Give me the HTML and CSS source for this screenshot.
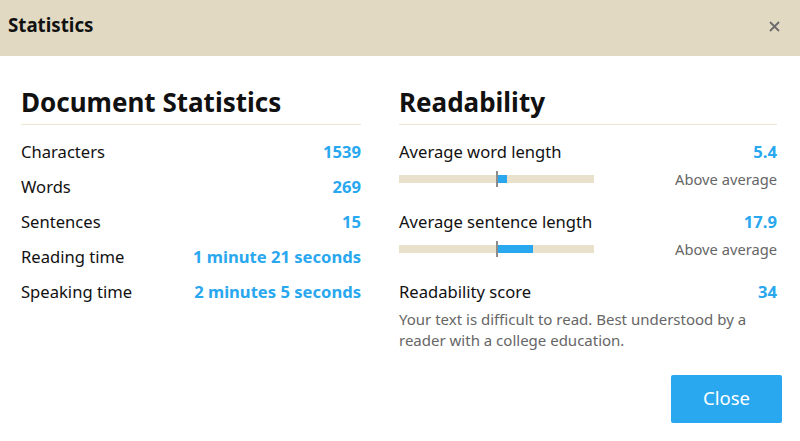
FILE: index.html
```html
<!DOCTYPE html>
<html>
<head>
<meta charset="utf-8">
<link rel="stylesheet" href="styles.css">
</head>
<body>
<div class="dialog">
  <header class="dialog-header">
    <h1 class="dialog-title">Statistics</h1>
    <button class="dialog-x" aria-label="Close">
      <svg width="11" height="11" viewBox="0 0 11 11"><path d="M1 1L10 10M10 1L1 10" stroke="#6b6b6b" stroke-width="1.8" fill="none"/></svg>
    </button>
  </header>
  <main class="dialog-body">
    <section class="col">
      <h2 class="col-title">Document Statistics</h2>
      <div class="row"><span>Characters</span><span class="val">1539</span></div>
      <div class="row"><span>Words</span><span class="val">269</span></div>
      <div class="row"><span>Sentences</span><span class="val">15</span></div>
      <div class="row"><span>Reading time</span><span class="val">1 minute 21 seconds</span></div>
      <div class="row"><span>Speaking time</span><span class="val">2 minutes 5 seconds</span></div>
    </section>
    <section class="col">
      <h2 class="col-title">Readability</h2>
      <div class="metric">
        <div class="row"><span>Average word length</span><span class="val">5.4</span></div>
        <div class="bar-row">
          <div class="bar"><div class="bar-fill" style="width:9px"></div><div class="bar-mark"></div></div>
          <span class="note">Above average</span>
        </div>
      </div>
      <div class="metric">
        <div class="row"><span>Average sentence length</span><span class="val">17.9</span></div>
        <div class="bar-row">
          <div class="bar"><div class="bar-fill" style="width:35px"></div><div class="bar-mark"></div></div>
          <span class="note">Above average</span>
        </div>
      </div>
      <div class="row"><span>Readability score</span><span class="val">34</span></div>
      <p class="desc">Your text is difficult to read. Best understood by a reader with a college education.</p>
    </section>
  </main>
  <footer class="dialog-footer">
    <button class="btn-close">Close</button>
  </footer>
</div>
</body>
</html>
```
FILE: styles.css
```css
* { box-sizing: border-box; }
html, body { margin: 0; padding: 0; background: #fff; }
body { font-family: "Noto Sans", "Open Sans", sans-serif; color: #111; }
.dialog { width: 800px; height: 441px; background: #fff; }
.dialog-header {
  height: 56px;
  background: #e2d9c2;
  display: flex;
  align-items: center;
  justify-content: space-between;
  padding: 0 20px 0 8px;
}
.dialog-title { margin: 0; font-size: 18.7px; font-weight: 700; color: #111; line-height: 24px; padding-bottom: 6px; }
.dialog-x { background: none; border: 0; padding: 0; width: 11px; height: 11px; display: flex; cursor: pointer; margin-bottom: 4px; }
.dialog-body {
  display: grid;
  grid-template-columns: 340px 1fr;
  column-gap: 38px;
  padding: 30px 23px 0 21px;
}
.col-title {
  margin: 0 0 9px;
  font-size: 26px;
  font-weight: 700;
  line-height: 32px;
  padding-bottom: 6px;
  border-bottom: 1px solid #ede6d3;
  color: #111;
}
.row {
  display: flex;
  justify-content: space-between;
  font-size: 16.6px;
  line-height: 35px;
  height: 35px;
  color: #111;
}
.val { color: #29a7ef; font-weight: 700; }
.metric { margin-bottom: 15px; }
.bar-row { display: flex; align-items: center; justify-content: space-between; height: 20px; }
.bar { position: relative; width: 195px; height: 8px; background: #e9e1cb; }
.bar-fill { position: absolute; left: 99px; top: 0; height: 8px; background: #29a7ef; }
.bar-mark { position: absolute; left: 97px; top: -4px; width: 2px; height: 16px; background: #8c8c8c; }
.note { font-size: 14.7px; color: #666; line-height: 20px; }
.desc { margin: 0; font-size: 15px; line-height: 21px; color: #666; padding-right: 20px; }
.dialog-footer { display: flex; justify-content: flex-end; padding: 24px 18px 0 0; }
.btn-close {
  width: 111px;
  height: 48px;
  border: 0;
  border-radius: 2px;
  background: #29a7ef;
  color: #fff;
  font-family: "Noto Sans", "Open Sans", sans-serif;
  font-size: 18.5px;
  line-height: 46px;
  padding: 0 0 2px;
  cursor: pointer;
}
```
